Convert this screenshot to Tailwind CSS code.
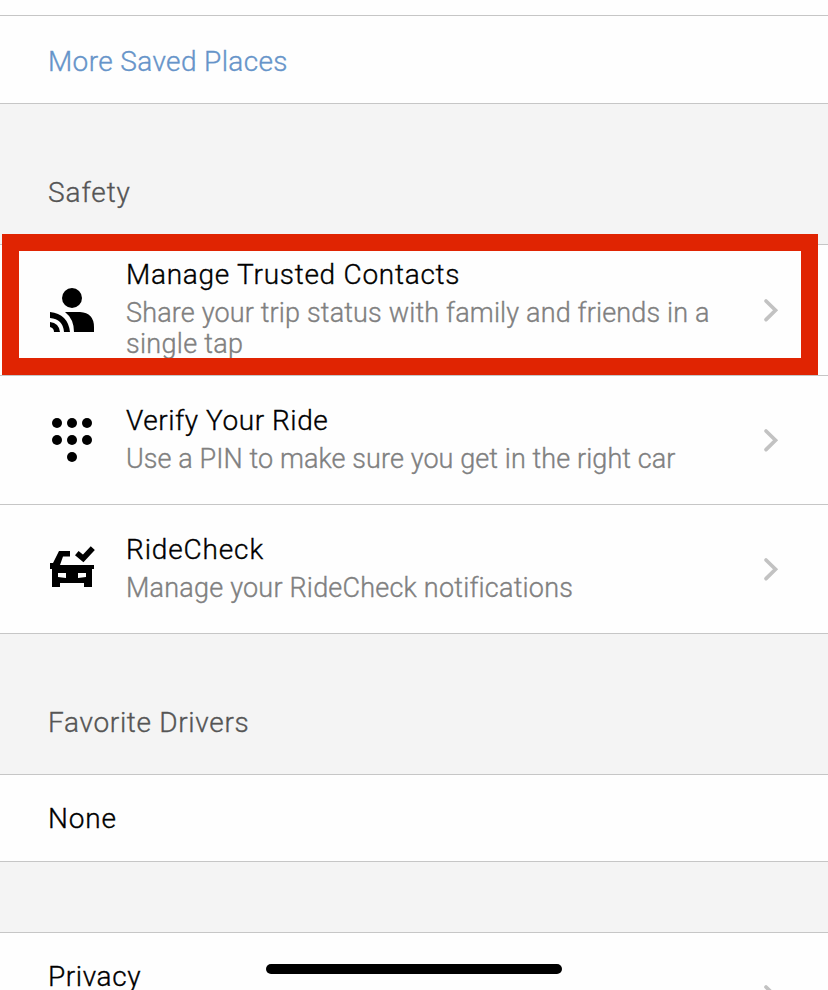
<!DOCTYPE html>
<html lang="en">
<head>
<meta charset="utf-8">
<title>Settings</title>
<script src="https://cdn.jsdelivr.net/npm/@tailwindcss/browser@4"></script>
</head>
<body class="w-[828px] h-[990px] overflow-hidden bg-[#fefefe] text-black">
<main class="relative w-[828px] h-[990px] overflow-hidden flex flex-col font-[Roboto,sans-serif] font-light [-webkit-text-stroke-width:0.35px] text-[28px] leading-[32px] whitespace-nowrap">
  <div class="h-[15px] shrink-0"></div>
  <a class="h-[88px] shrink-0 border-t border-[#c6c6c6] pt-[30px] pl-[48px] text-[#6694c9]"><span class="tracking-[0.37px]">More Saved Places</span></a>
  <h2 class="h-[141px] shrink-0 border-t border-[#c6c6c6] bg-[#f4f4f4] pt-[73px] pl-[48px] font-light text-[#555]"><span class="tracking-[0.9px]">Safety</span></h2>

  <section class="h-[131px] shrink-0 border-t border-[#c6c6c6] flex pl-[48px] pr-[48px]">
    <svg class="w-[48px] h-[48px] mt-[41px] shrink-0" viewBox="0 0 48 48"><circle cx="24" cy="12" r="10"/><path d="M17 26H32Q46 27 46 41V46H26Q26 33 17 26ZM2 26Q20 28 22 46H16Q15 33 2 32ZM2 36Q11 37 12 46H6Q6 42 2 41Z"/></svg>
    <div class="ml-[30px] pt-[14px] grow">
      <h3 class="font-light"><span class="tracking-[0.73px]">Manage Trusted Contacts</span></h3>
      <p class="text-[27px] leading-[31px] mt-[7px] text-[#808080]"><span class="tracking-[0.16px]">Share your trip status with family and friends in a</span><br><span class="tracking-[0.3px]">single tap</span></p>
    </div>
    <svg class="w-[18px] h-[26px] mt-[52px] shrink-0" viewBox="0 0 18 26" fill="none" stroke="#c2c2c2" stroke-width="3.7" stroke-linecap="round"><path d="M4 4L13.5 13.3L4 22.6"/></svg>
  </section>

  <section class="h-[129px] shrink-0 border-t border-[#c6c6c6] flex pl-[48px] pr-[48px]">
    <svg class="w-[48px] h-[48px] mt-[39px] shrink-0" viewBox="0 0 48 48"><circle cx="9" cy="8" r="5"/><circle cx="24" cy="8" r="5"/><circle cx="39" cy="8" r="5"/><circle cx="9" cy="25" r="5"/><circle cx="24" cy="25" r="5"/><circle cx="39" cy="25" r="5"/><circle cx="24" cy="42" r="5"/></svg>
    <div class="ml-[30px] pt-[29px] grow">
      <h3 class="font-light"><span class="tracking-[0.54px]">Verify Your Ride</span></h3>
      <p class="text-[27px] leading-[31px] mt-[7px] text-[#808080]"><span class="tracking-[0.09px]">Use a PIN to make sure you get in the right car</span></p>
    </div>
    <svg class="w-[18px] h-[26px] mt-[51px] shrink-0" viewBox="0 0 18 26" fill="none" stroke="#c2c2c2" stroke-width="3.7" stroke-linecap="round"><path d="M4 4L13.5 13.3L4 22.6"/></svg>
  </section>

  <section class="h-[129px] shrink-0 border-t border-[#c6c6c6] flex pl-[48px] pr-[48px]">
    <svg class="w-[48px] h-[48px] mt-[39px] shrink-0" viewBox="0 0 48 48"><path fill-rule="evenodd" d="M11 7H22V12.5H15L12 21H46V25H44V43H36V39H12V43H4V25H2V19H5ZM10 29V33L18 34V29ZM38 29H30V34L38 33Z"/><path d="M28.8 9.2L35.2 14.5L44.8 4.2" fill="none" stroke="#000" stroke-width="5.6"/></svg>
    <div class="ml-[30px] pt-[29px] grow">
      <h3 class="font-light"><span class="tracking-[0.85px]">RideCheck</span></h3>
      <p class="text-[27px] leading-[31px] mt-[7px] text-[#808080]"><span class="tracking-[0.21px]">Manage your RideCheck notifications</span></p>
    </div>
    <svg class="w-[18px] h-[26px] mt-[51px] shrink-0" viewBox="0 0 18 26" fill="none" stroke="#c2c2c2" stroke-width="3.7" stroke-linecap="round"><path d="M4 4L13.5 13.3L4 22.6"/></svg>
  </section>

  <h2 class="h-[141px] shrink-0 border-t border-[#c6c6c6] bg-[#f4f4f4] pt-[73px] pl-[48px] font-light text-[#555]"><span class="tracking-[0.68px]">Favorite Drivers</span></h2>
  <div class="h-[87px] shrink-0 border-t border-[#c6c6c6] pt-[28px] pl-[48px]"><span class="tracking-[0.8px]">None</span></div>
  <div class="h-[71px] shrink-0 border-t border-[#c6c6c6] bg-[#f4f4f4]"></div>
  <section class="h-[129px] shrink-0 border-t border-[#c6c6c6] flex justify-between pl-[48px] pr-[48px]">
    <h3 class="pt-[28px] font-light"><span class="tracking-[0.6px]">Privacy</span></h3>
    <svg class="w-[18px] h-[26px] mt-[50px] shrink-0" viewBox="0 0 18 26" fill="none" stroke="#c2c2c2" stroke-width="3.7" stroke-linecap="round"><path d="M4 4L13.5 13.3L4 22.6"/></svg>
  </section>

  <div class="absolute left-[2px] top-[234px] w-[816px] h-[141px] border-[#e02402] border-[17px]"></div>
  <div class="absolute left-[266px] top-[964px] w-[296px] h-[10px] rounded-full bg-black"></div>
</main>
</body>
</html>
